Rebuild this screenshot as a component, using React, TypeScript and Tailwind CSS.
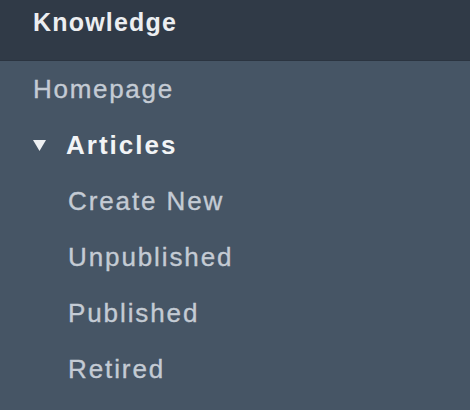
import React from "react";

const font = { fontFamily: '"Liberation Sans", Arial, sans-serif' };

export default function App() {
  const sub = ["Create New", "Unpublished", "Published", "Retired"];
  return (
    <div className="w-[470px] h-[410px] bg-[#465565] flex flex-col" style={font}>
      <div className="h-[61px] bg-[#303a47] border-b border-[#2b3440] pt-[10px] pl-[33px] shrink-0">
        <div className="text-[25px] font-bold text-[#eceef1] tracking-[1.2px] leading-none">Knowledge</div>
      </div>
      <div className="flex flex-col">
        <div className="h-[56px] flex items-center pl-[33px]">
          <span className="text-[26px] text-[#c4cbd4] tracking-[1.7px] leading-none [-webkit-text-stroke:0.35px_#c4cbd4]">Homepage</span>
        </div>
        <div className="h-[56px] flex items-center pl-[33px]">
          <svg width="13" height="11" viewBox="0 0 13 11" className="mr-[20px]">
            <path d="M0 0 H13 L6.5 11 Z" fill="#eef0f2" />
          </svg>
          <span className="text-[26px] font-bold text-[#f2f4f6] tracking-[2px] leading-none">Articles</span>
        </div>
        {sub.map((s) => (
          <div key={s} className="h-[56px] flex items-center pl-[68px]">
            <span className="text-[26px] text-[#c4cbd4] tracking-[1.9px] leading-none [-webkit-text-stroke:0.35px_#c4cbd4]">{s}</span>
          </div>
        ))}
      </div>
    </div>
  );
}
